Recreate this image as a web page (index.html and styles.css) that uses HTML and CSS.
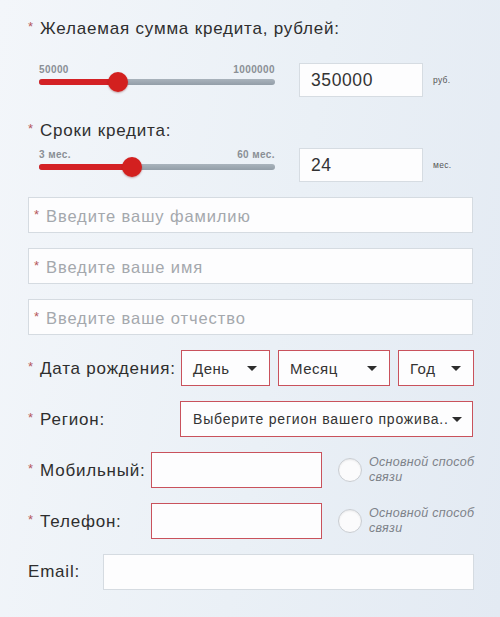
FILE: index.html
```html
<!DOCTYPE html>
<html lang="ru">
<head>
<meta charset="utf-8">
<link rel="stylesheet" href="styles.css">
</head>
<body>
<div class="form">
  <div class="title"><span class="req">*</span>Желаемая сумма кредита, рублей:</div>
  <div class="slider-row">
    <div class="slider">
      <div class="ticks"><span>50000</span><span>1000000</span></div>
      <div class="track">
        <div class="fill" style="width:79px"></div>
        <div class="thumb" style="left:79px"></div>
      </div>
    </div>
    <div class="num">350000</div>
    <span class="unit">руб.</span>
  </div>

  <div class="title t2"><span class="req">*</span>Сроки кредита:</div>
  <div class="slider-row r2">
    <div class="slider">
      <div class="ticks"><span>3 мес.</span><span>60 мес.</span></div>
      <div class="track">
        <div class="fill" style="width:93px"></div>
        <div class="thumb" style="left:93px"></div>
      </div>
    </div>
    <div class="num">24</div>
    <span class="unit">мес.</span>
  </div>

  <div class="field first"><span class="req">*</span><span class="ph">Введите вашу фамилию</span></div>
  <div class="field"><span class="req">*</span><span class="ph">Введите ваше имя</span></div>
  <div class="field"><span class="req">*</span><span class="ph">Введите ваше отчество</span></div>

  <div class="row">
    <div class="label w-date"><span class="req">*</span>Дата рождения:</div>
    <div class="selects">
      <div class="select s-day">День<i class="arrow"></i></div>
      <div class="select s-month">Месяц<i class="arrow"></i></div>
      <div class="select s-year">Год<i class="arrow"></i></div>
    </div>
  </div>

  <div class="row">
    <div class="label w-region"><span class="req">*</span>Регион:</div>
    <div class="select s-region"><span class="region-text">Выберите регион вашего прожива..</span><i class="arrow"></i></div>
  </div>

  <div class="row">
    <div class="label w-phone"><span class="req">*</span>Мобильный:</div>
    <div class="box red"></div>
    <div class="radio"><span class="circle"></span><span class="rtext">Основной способ<br>связи</span></div>
  </div>

  <div class="row">
    <div class="label w-phone"><span class="req">*</span>Телефон:</div>
    <div class="box red"></div>
    <div class="radio"><span class="circle"></span><span class="rtext">Основной способ<br>связи</span></div>
  </div>

  <div class="row">
    <div class="label w-email">Email:</div>
    <div class="box email"></div>
  </div>
</div>
</body>
</html>
```

FILE: styles.css
```css
html, body {
  margin: 0;
  padding: 0;
}
body {
  width: 500px;
  height: 617px;
  overflow: hidden;
  background: linear-gradient(100deg, #f3f6fa 0%, #eaf0f6 55%, #e3eaf3 100%);
  font-family: "Liberation Sans", Arial, sans-serif;
  color: #2e2e2e;
}
.form {
  width: 445px;
  padding: 17px 0 0 28px;
}
.req {
  color: #b5585d;
  font-size: 13px;
  letter-spacing: 0;
  display: inline-block;
  width: 12px;
  vertical-align: 3px;
}
.title {
  font-size: 17px;
  letter-spacing: 0.8px;
  line-height: 20px;
  height: 20px;
}
.t2 {
  margin-top: 22px;
}
.slider-row {
  display: flex;
  align-items: flex-start;
  margin-top: 26px;
}
.slider-row.r2 {
  margin-top: 9px;
}
.slider {
  width: 236px;
  margin-left: 11px;
}
.ticks {
  display: flex;
  justify-content: space-between;
  font-size: 10px;
  letter-spacing: 0.4px;
  line-height: 12px;
  height: 12px;
  color: #8a8f95;
  font-weight: bold;
  padding-top: 1px;
}
.track {
  position: relative;
  margin-top: 3px;
  height: 6px;
  border-radius: 3px;
  background: linear-gradient(#a9b3bc, #939ea8);
}
.fill {
  height: 6px;
  border-radius: 3px;
  background: #d42125;
}
.thumb {
  position: absolute;
  top: -7px;
  width: 20px;
  height: 20px;
  margin-left: -10px;
  border-radius: 50%;
  background: #d3201f;
  box-shadow: 0 1px 2px rgba(120, 0, 0, 0.35);
}
.num {
  box-sizing: border-box;
  width: 124px;
  height: 34px;
  margin-left: 24px;
  padding-left: 11px;
  background: #fdfdfe;
  border: 1px solid #d6dce2;
  font-size: 17.5px;
  letter-spacing: 0.6px;
  line-height: 32px;
  color: #333;
}
.unit {
  margin-left: 10px;
  margin-top: 12px;
  font-size: 8.5px;
  letter-spacing: 0.3px;
  color: #555;
}
.field {
  box-sizing: border-box;
  height: 36px;
  width: 445px;
  margin-top: 15px;
  padding-left: 5px;
  background: #fdfdfe;
  border: 1px solid #d5dbe1;
  font-size: 16.5px;
  letter-spacing: 0.9px;
  line-height: 34px;
}
.field .req {
  width: 12px;
}
.ph {
  color: #a4a8ad;
}
.row {
  display: flex;
  align-items: center;
  height: 36px;
  margin-top: 15px;
}
.label {
  font-size: 17px;
  letter-spacing: 0.8px;
  line-height: 20px;
  flex: none;
}
.w-date { width: 153px; }
.w-region { width: 152px; }
.w-phone { width: 123px; }
.w-email { width: 75px; }
.selects {
  display: flex;
  gap: 8px;
}
.select {
  box-sizing: border-box;
  position: relative;
  display: flex;
  align-items: center;
  height: 36px;
  padding-left: 11px;
  background: #fdfdfe;
  border: 1px solid #c9525c;
  font-size: 15px;
  letter-spacing: 0.5px;
  color: #333;
}
.s-day { width: 89px; }
.s-month { width: 112px; }
.s-year { width: 76px; }
.s-region {
  width: 294px;
  font-size: 14px;
  letter-spacing: 0.8px;
  padding-left: 12px;
}
.arrow {
  position: absolute;
  right: 12px;
  top: 15px;
  width: 0;
  height: 0;
  border-left: 5px solid transparent;
  border-right: 5px solid transparent;
  border-top: 5px solid #2d2d2d;
}
.s-region .arrow {
  right: 10px;
}
.box {
  box-sizing: border-box;
  flex: none;
  width: 171px;
  height: 36px;
  background: #fdfdfe;
}
.box.red {
  border: 1px solid #c9525c;
}
.box.email {
  width: 371px;
  border: 1px solid #d5dbe1;
}
.radio {
  display: flex;
  flex: none;
  align-items: center;
  margin-left: 16px;
}
.circle {
  box-sizing: border-box;
  flex: none;
  width: 24px;
  height: 24px;
  border-radius: 50%;
  border: 1px solid #c9cdd2;
  background: #fbfbfc;
  box-shadow: inset 0 1px 2px rgba(0, 0, 0, 0.08);
}
.rtext {
  margin-left: 7px;
  white-space: nowrap;
  font-size: 12.5px;
  letter-spacing: 0.3px;
  line-height: 15px;
  font-style: italic;
  color: #7d8289;
}
```
